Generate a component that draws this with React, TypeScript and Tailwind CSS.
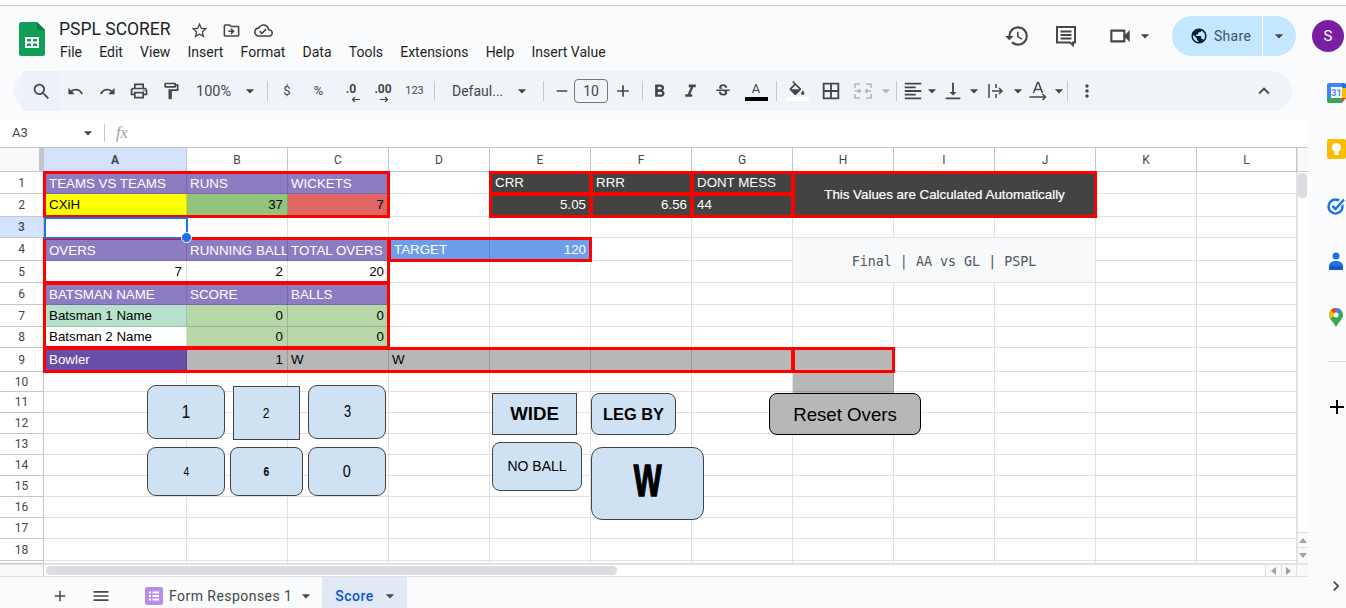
import type { ReactNode } from 'react';
import {
  MdStarBorder,
  MdOutlineDriveFileMove,
  MdOutlineCloudDone,
  MdHistory,
  MdOutlineVideocam,
  MdPublic,
  MdSearch,
  MdUndo,
  MdRedo,
  MdOutlinePrint,
  MdOutlineFormatPaint,
  MdFormatBold,
  MdFormatItalic,
  MdStrikethroughS,
  MdBorderAll,
  MdFormatAlignLeft,
  MdVerticalAlignBottom,
  MdMoreVert,
  MdExpandLess,
  MdAdd,
  MdMenu,
  MdChevronRight,
  MdArrowDropDown,
  MdRemove,
} from 'react-icons/md';

const COLS = ['', 'A', 'B', 'C', 'D', 'E', 'F', 'G', 'H', 'I', 'J', 'K', 'L'];
const ROWS = Array.from({ length: 19 }, (_, i) => i + 1);
const GRID =
  'grid grid-cols-[44px_143px_101px_101px_101px_101px_101px_101px_101px_101px_101px_101px_100px] grid-rows-[24px_22px_23px_21px_23px_22px_22px_22px_21px_24px_20px_21px_21px_21px_21px_21px_21px_21px_22px_3px]';

type Cell = { t?: string; bg?: string; cls?: string };

const head = 'pt-[3px] text-white';
const num = 'text-right';
const dark = 'bg-[#434343] text-white';

const cells: Record<string, Cell> = {
  A1: { t: 'TEAMS VS TEAMS', bg: 'bg-[#8e7cc3]', cls: head },
  B1: { t: 'RUNS', bg: 'bg-[#8e7cc3]', cls: head },
  C1: { t: 'WICKETS', bg: 'bg-[#8e7cc3]', cls: head },
  A2: { t: 'CXiH', bg: 'bg-[#ffff00]' },
  B2: { t: '37', bg: 'bg-[#93c47d]', cls: num },
  C2: { t: '7', bg: 'bg-[#e06666]', cls: num },
  E1: { t: 'CRR', bg: dark },
  F1: { t: 'RRR', bg: dark },
  G1: { t: 'DONT MESS', bg: dark },
  E2: { t: '5.05', bg: dark, cls: num },
  F2: { t: '6.56', bg: dark, cls: num },
  G2: { t: '44', bg: dark },
  A4: { t: 'OVERS', bg: 'bg-[#8e7cc3]', cls: head },
  B4: { t: 'RUNNING BALL', bg: 'bg-[#8e7cc3]', cls: head },
  C4: { t: 'TOTAL OVERS', bg: 'bg-[#8e7cc3]', cls: head },
  D4: { t: 'TARGET', bg: 'bg-[#6d9eeb]', cls: 'pt-px text-white' },
  E4: { t: '120', bg: 'bg-[#6d9eeb]', cls: 'pt-px text-right text-white' },
  A5: { t: '7', cls: num },
  B5: { t: '2', cls: num },
  C5: { t: '20', cls: num },
  A6: { t: 'BATSMAN NAME', bg: 'bg-[#8e7cc3]', cls: head },
  B6: { t: 'SCORE', bg: 'bg-[#8e7cc3]', cls: head },
  C6: { t: 'BALLS', bg: 'bg-[#8e7cc3]', cls: head },
  A7: { t: 'Batsman 1 Name', bg: 'bg-[#b7e1cd]' },
  B7: { t: '0', bg: 'bg-[#b6d7a8]', cls: num },
  C7: { t: '0', bg: 'bg-[#b6d7a8]', cls: num },
  A8: { t: 'Batsman 2 Name' },
  B8: { t: '0', bg: 'bg-[#b6d7a8]', cls: num },
  C8: { t: '0', bg: 'bg-[#b6d7a8]', cls: num },
  A9: { t: 'Bowler', bg: 'bg-[#674ea7]', cls: 'text-white' },
  B9: { t: '1', bg: 'bg-[#b7b7b7]', cls: num },
  C9: { t: 'W', bg: 'bg-[#b7b7b7]' },
  D9: { t: 'W', bg: 'bg-[#b7b7b7]' },
  E9: { bg: 'bg-[#b7b7b7]' },
  F9: { bg: 'bg-[#b7b7b7]' },
  G9: { bg: 'bg-[#b7b7b7]' },
  H9: { bg: 'bg-[#b7b7b7]' },
  H10: { bg: 'bg-[#b7b7b7]' },
  H11: { bg: 'bg-[#b7b7b7]' },
};

const redBoxes = [
  'col-[2/5] row-[2/4]',
  'col-[2/5] row-[5/7]',
  'col-[2/5] row-[7/10]',
  'col-[2/9] row-[10/11]',
  'col-[9/10] row-[10/11]',
  'col-[5/7] row-[5/6]',
  'col-[6/7] row-[2/3]',
  'col-[7/8] row-[2/3]',
  'col-[8/9] row-[2/3]',
  'col-[6/7] row-[3/4]',
  'col-[7/8] row-[3/4]',
  'col-[8/9] row-[3/4]',
  'col-[9/12] row-[2/4]',
];

function Caret({ className = '' }: { className?: string }) {
  return <MdArrowDropDown className={`shrink-0 text-[20px] text-[#444746] ${className}`} />;
}

function Slot({ className, children }: { className: string; children?: ReactNode }) {
  return <div className={`flex h-full shrink-0 items-center justify-center text-[#444746] ${className}`}>{children}</div>;
}

function Sep({ className }: { className: string }) {
  return (
    <div className={`flex h-full shrink-0 items-center justify-center ${className}`}>
      <div className="h-[20px] w-px bg-[#c7c7c7]" />
    </div>
  );
}

function SheetsLogo() {
  return (
    <svg width="26" height="34" viewBox="0 0 26 34">
      <path d="M2.5 0H18l8 8v23.500a2.500 2.500 0 0 1-2.500 2.500h-21A2.500 2.500 0 0 1 0 31.500v-29A2.500 2.500 0 0 1 2.500 0z" fill="#0f9d58" />
      <path d="M18 0l8 8h-8z" fill="#0b7f46" />
      <path d="M6 15h14v11H6z M8 17v2.500h4V17z M14 17v2.500h4V17z M8 21.500V24h4v-2.500z M14 21.500V24h4v-2.500z" fill="#fff" fillRule="evenodd" />
    </svg>
  );
}

function CommentIcon() {
  return (
    <svg width="24" height="24" viewBox="0 0 24 24" fill="none" stroke="#444746" strokeWidth="2">
      <path d="M3 3h18v15.500h-2v2.500l-3-2.500H3z" />
      <path d="M6.500 7.500h11M6.500 11h11M6.500 14.500h11" />
    </svg>
  );
}

function MergeIcon() {
  return (
    <svg width="18" height="18" viewBox="0 0 18 18" fill="none" stroke="#b4b6b8" strokeWidth="1.500">
      <path d="M1 6V2h5M12 2h5v4M17 12v4h-5M6 16H1v-4" />
      <path d="M1 9h5M4.500 7l2 2-2 2M17 9h-5M13.500 7l-2 2 2 2" />
    </svg>
  );
}

function WrapIcon() {
  return (
    <svg width="20" height="20" viewBox="0 0 20 20" fill="none" stroke="#444746" strokeWidth="1.500">
      <path d="M3 3v14M10 3v4M10 13v4M6 10h10M13 7l3 3-3 3" />
    </svg>
  );
}

function RotateIcon() {
  return (
    <svg width="22" height="22" viewBox="0 0 22 22" fill="none" stroke="#444746" strokeWidth="1.500">
      <path d="M6.500 13L10.500 2.500h1L15.500 13M8 9.500h6" />
      <path d="M2.500 17h16M15.500 14l3 3-3 3" />
    </svg>
  );
}

function FillIcon() {
  return (
    <svg width="18" height="14" viewBox="3 0 18 17" fill="#444746">
      <path d="M16.560 8.940L7.620 0 6.210 1.410l2.380 2.380-5.150 5.150c-.59.59-.59 1.540 0 2.120l5.500 5.500c.29.29.68.44 1.060.44s.77-.15 1.060-.44l5.500-5.500c.59-.58.59-1.530 0-2.120zM5.210 10L10 5.210 14.790 10H5.210z" />
      <path d="M19 11.500s-2 2.170-2 3.500c0 1.100.9 2 2 2s2-.9 2-2c0-1.330-2-3.500-2-3.500z" />
    </svg>
  );
}

function DecimalArrow({ dir }: { dir: 'left' | 'right' }) {
  return (
    <svg width="10" height="7" viewBox="0 0 10 7" fill="none" stroke="#444746" strokeWidth="1.200" className="absolute -bottom-[5px] left-[5px]">
      {dir === 'left' ? <path d="M9 3.500H1.500M4 1L1.500 3.500 4 6" /> : <path d="M1 3.500h7.500M6 1l2.500 2.500L6 6" />}
    </svg>
  );
}

function CalendarIcon() {
  return (
    <svg width="19" height="20" viewBox="0 0 19 20">
      <path d="M4 0h11v4H4z" fill="#4285f4" />
      <path d="M0 2a2 2 0 0 1 2-2h2v15H0z" fill="#4285f4" />
      <path d="M15 0h2a2 2 0 0 1 2 2v3h-4z" fill="#1a73e8" />
      <path d="M15 5h4v10h-4z" fill="#fbbc04" />
      <path d="M0 15h15v5H2a2 2 0 0 1-2-2z" fill="#34a853" />
      <path d="M15 15h4l-4 5z" fill="#ea4335" />
      <rect x="4" y="4" width="11" height="11" fill="#fff" />
      <text x="9.500" y="13" textAnchor="middle" fontSize="9" fontWeight="700" fill="#4285f4" fontFamily="Roboto, sans-serif">31</text>
    </svg>
  );
}

function KeepIcon() {
  return (
    <svg width="19" height="20" viewBox="0 0 19 20">
      <rect width="19" height="20" rx="2" fill="#fbbc04" />
      <circle cx="9.500" cy="8.500" r="4.500" fill="#fff" />
      <rect x="7.500" y="13" width="4" height="3" fill="#fff" />
    </svg>
  );
}

function TasksIcon() {
  return (
    <svg width="19" height="18" viewBox="0 0 19 18" fill="none">
      <circle cx="8.500" cy="9.500" r="7" stroke="#1a73e8" strokeWidth="2.500" />
      <path d="M5 9l3 3 9-10" stroke="#fff" strokeWidth="5" />
      <path d="M5.500 9l3 3 8.500-9.500" stroke="#1a73e8" strokeWidth="2.500" />
    </svg>
  );
}

function ContactsIcon() {
  return (
    <svg width="14" height="18" viewBox="0 0 14 18">
      <circle cx="7" cy="4" r="3.500" fill="#1a73e8" />
      <path d="M0 14c0-3 3-5 7-5s7 2 7 5v4H0z" fill="#1a73e8" />
      <path d="M0 14h14v4H0z" fill="#185abc" />
    </svg>
  );
}

function MapsIcon() {
  return (
    <svg width="14" height="19" viewBox="0 0 14 19">
      <path d="M7 0a7 7 0 0 1 7 7c0 4-4.500 7-7 12C4.500 14 0 11 0 7a7 7 0 0 1 7-7z" fill="#34a853" />
      <path d="M7 0a7 7 0 0 1 5.300 2.400L7 7z" fill="#4285f4" />
      <path d="M7 0a7 7 0 0 0-5.300 2.400L7 7z" fill="#ea4335" />
      <path d="M1.700 2.400A7 7 0 0 0 0 7c0 1.300.5 2.500 1.200 3.600L7 7z" fill="#fbbc04" />
      <circle cx="7" cy="7" r="2.500" fill="#fff" />
    </svg>
  );
}

function FormsIcon() {
  return (
    <svg width="18" height="18" viewBox="0 0 18 18">
      <rect width="18" height="18" rx="2" fill="#b98ce6" />
      <path d="M4 4.500h2v2H4zM4 8h2v2H4zM4 11.500h2v2H4zM7.500 4.500H14v2H7.500zM7.500 8H14v2H7.500zM7.500 11.500H14v2H7.500z" fill="#fff" />
    </svg>
  );
}

function TitleBar() {
  return (
    <header className="flex h-[65px] shrink-0 items-start font-['Roboto',sans-serif]">
      <div className="ml-[19px] mt-[16px]">
        <SheetsLogo />
      </div>
      <div className="ml-[14px] mt-[12px] flex flex-col">
        <div className="flex h-[24px] items-center text-[#444746]">
          <span className="w-[131px] text-[17.5px] leading-none text-[#1f1f1f]">PSPL SCORER</span>
          <MdStarBorder className="text-[19px]" />
          <MdOutlineDriveFileMove className="ml-[13px] text-[19px]" />
          <MdOutlineCloudDone className="ml-[13px] text-[19px]" />
        </div>
        <nav className="mt-px flex gap-[17.2px] pl-px text-[14px] leading-[18px] text-[#1f1f1f]">
          {['File', 'Edit', 'View', 'Insert', 'Format', 'Data', 'Tools', 'Extensions', 'Help', 'Insert Value'].map((m) => (
            <span key={m}>{m}</span>
          ))}
        </nav>
      </div>
      <div className="ml-auto mr-[2px] mt-[10px] flex h-[40px] items-center text-[#444746]">
        <MdHistory className="text-[26px]" />
        <div className="ml-[24px]">
          <CommentIcon />
        </div>
        <MdOutlineVideocam className="ml-[29px] text-[26px]" />
        <Caret className="ml-[2px]" />
        <div className="ml-[17px] flex h-[40px] w-[124px] items-center rounded-full bg-[#c2e7ff] text-[#001d35]">
          <div className="flex h-full w-[91px] items-center border-r border-white pl-[18px]">
            <MdPublic className="text-[18px]" />
            <span className="ml-[6px] text-[14px] tracking-[0.3px] text-[#3b5266]">Share</span>
          </div>
          <Caret className="ml-[6px] text-[#001d35]" />
        </div>
        <div className="ml-[16px] flex size-[32px] items-center justify-center rounded-full bg-[#7b1fa2] text-[15px] text-white">S</div>
      </div>
    </header>
  );
}

function Toolbar() {
  return (
    <div className="mx-[14px] flex h-[40px] w-[1278px] shrink-0 items-center rounded-full bg-[#f0f4f9] font-['Roboto',sans-serif] text-[#444746]">
      <Slot className="ml-[8px] w-[38px] bg-[#edf2fa]"><MdSearch className="text-[21px]" /></Slot>
      <Slot className="w-[31px]"><MdUndo className="text-[17px]" /></Slot>
      <Slot className="w-[32px]"><MdRedo className="text-[17px]" /></Slot>
      <Slot className="w-[32px]"><MdOutlinePrint className="text-[20px]" /></Slot>
      <Slot className="w-[31px]"><MdOutlineFormatPaint className="text-[20px]" /></Slot>
      <Slot className="w-[54px] justify-start pl-[10px] pt-px text-[14.5px]">100%</Slot>
      <Slot className="w-[20px]"><Caret /></Slot>
      <Sep className="w-[14px]" />
      <Slot className="w-[26px] text-[13px]">$</Slot>
      <Slot className="w-[37px] text-[13px]">%</Slot>
      <Slot className="w-[28px] text-[12px] font-bold">
        <span className="relative -top-[2px]">.0<DecimalArrow dir="left" /></span>
      </Slot>
      <Slot className="w-[36px] text-[12px] font-bold">
        <span className="relative -top-[2px]">.00<DecimalArrow dir="right" /></span>
      </Slot>
      <Slot className="w-[27px] text-[11px]">123</Slot>
      <Sep className="w-[12px]" />
      <Slot className="w-[74px] justify-start pl-[12px] text-[14px]">Defaul...</Slot>
      <Slot className="w-[16px]"><Caret /></Slot>
      <Sep className="w-[26px]" />
      <Slot className="-ml-[6px] w-[24px]"><MdRemove className="text-[18px]" /></Slot>
      <Slot className="w-[34px]">
        <div className="flex h-[24px] w-[34px] items-center justify-center rounded-[4px] border border-[#747775] text-[14px]">10</div>
      </Slot>
      <Slot className="w-[30px]"><MdAdd className="text-[20px]" /></Slot>
      <Sep className="w-[8px]" />
      <Slot className="w-[26px]"><MdFormatBold className="text-[21px]" /></Slot>
      <Slot className="w-[36px]"><MdFormatItalic className="text-[21px]" /></Slot>
      <Slot className="w-[30px]"><MdStrikethroughS className="text-[18px]" /></Slot>
      <Slot className="w-[36px]">
        <div className="flex w-[23px] flex-col items-center">
          <span className="text-[13px] leading-[15px]">A</span>
          <div className="mt-[1px] h-[4px] w-[23px] bg-black" />
        </div>
      </Slot>
      <Sep className="w-[4px]" />
      <Slot className="w-[38px]">
        <div className="flex w-[23px] flex-col items-center">
          <FillIcon />
          <div className="mt-[2px] h-[4px] w-[23px] bg-white" />
        </div>
      </Slot>
      <Slot className="w-[30px]"><MdBorderAll className="text-[22px]" /></Slot>
      <Slot className="w-[34px]"><MergeIcon /></Slot>
      <Slot className="w-[12px]"><Caret className="text-[#b4b6b8]" /></Slot>
      <Sep className="w-[8px]" />
      <Slot className="w-[26px]"><MdFormatAlignLeft className="text-[22px]" /></Slot>
      <Slot className="w-[12px]"><Caret /></Slot>
      <Slot className="w-[30px]"><MdVerticalAlignBottom className="text-[22px]" /></Slot>
      <Slot className="w-[12px]"><Caret /></Slot>
      <Slot className="w-[32px]"><WrapIcon /></Slot>
      <Slot className="w-[12px]"><Caret /></Slot>
      <Slot className="w-[28px]"><RotateIcon /></Slot>
      <Slot className="w-[14px]"><Caret /></Slot>
      <Sep className="w-[2px]" />
      <Slot className="w-[38px]"><MdMoreVert className="text-[20px]" /></Slot>
      <Slot className="ml-auto mr-[16px] w-[24px]"><MdExpandLess className="text-[22px]" /></Slot>
    </div>
  );
}

function Sheet() {
  return (
    <div className="relative h-[416px] w-[1297px] shrink-0 overflow-hidden bg-white font-['Liberation_Sans',Arial,sans-serif] text-[13.33px] text-black">
      <div className={GRID}>
        {COLS.map((c) => (
          <div
            key={c || 'corner'}
            className={
              c === ''
                ? 'border-b-[1px] border-r-[5px] border-[#c4c7c5] bg-[#f8f9fa]'
                : `flex items-center justify-center border-b border-r border-[#c4c7c5] font-['Roboto',sans-serif] text-[12px] text-[#444746] ${c === 'A' ? 'bg-[#d3e3fd] font-bold text-[#041e49]' : 'bg-white'}`
            }
          >
            {c}
          </div>
        ))}
        {ROWS.map((r) => (
          <RowCells key={r} r={r} />
        ))}
      </div>

      {/* merged cells and selection lie over the base grid */}
      <div className={`pointer-events-none absolute inset-0 ${GRID}`}>
        <div className="col-[9/12] row-[2/4] flex items-center justify-center bg-[#434343] text-[13.33px] text-white [-webkit-text-stroke:0.2px_white]">
          This Values are Calculated Automatically
        </div>
        <div className="col-[9/12] row-[5/7] flex items-center justify-center border-b border-r border-[#e1e1e1] bg-[#f8f9fa] pt-[3px] font-['DejaVu_Sans_Mono',monospace] text-[13.33px] text-[#50565c]">
          Final | AA vs GL | PSPL
        </div>
        {redBoxes.map((b) => (
          <div key={b} className={`-m-px border-[3px] border-[#ff0000] ${b}`} />
        ))}
        <div className="relative col-[2/3] row-[4/5] -mb-px -mr-px border-2 border-[#1a73e8]">
          <div className="absolute -bottom-[6px] -right-[6px] size-[11px] rounded-full border border-white bg-[#1a73e8]" />
        </div>
      </div>

      <Drawings />
    </div>
  );
}

function RowCells({ r }: { r: number }) {
  return (
    <>
      <div
        className={`flex items-center justify-center border-b border-r border-[#c4c7c5] font-['Roboto',sans-serif] text-[12px] text-[#444746] ${r === 3 ? 'bg-[#d3e3fd] font-medium text-[#041e49]' : 'bg-white'}`}
      >
        {r < 19 ? r : ''}
      </div>
      {COLS.slice(1).map((c) => {
        const key = `${c}${r}`;
        const cell: Cell = cells[key] ?? {};
        const line = cell.bg ? 'border-black/15' : 'border-[#e1e1e1]';
        const pad = c === 'B' || c === 'C' || key === 'D9' ? 'pl-[3px]' : 'pl-[5px]';
        return (
          <div
            key={key}
            className={`flex items-center overflow-hidden whitespace-nowrap border-b border-r pr-[4px] ${pad} ${line} ${cell.bg ?? 'bg-white'} ${cell.cls ?? ''}`}
          >
            <span className="w-full">{cell.t}</span>
          </div>
        );
      })}
    </>
  );
}

const btn = 'absolute flex items-center justify-center border border-[#434343] bg-[#cfe2f3] text-black';

// shapes drawn on the sheet, placed on the canvas; offsets are from the sheet's top-left at y=148
function Drawings() {
  return (
    <>
      <div className={`${btn} left-[147px] top-[237px] h-[54px] w-[78px] rounded-[9px] text-[18px]`}><span className="scale-x-[0.85]">1</span></div>
      <div className={`${btn} left-[233px] top-[238px] h-[54px] w-[67px] text-[15px]`}><span className="scale-x-[0.8]">2</span></div>
      <div className={`${btn} left-[308px] top-[237px] h-[54px] w-[78px] rounded-[9px] text-[16px]`}><span className="scale-x-[0.8]">3</span></div>
      <div className={`${btn} left-[147px] top-[299px] h-[49px] w-[78px] rounded-[9px] text-[12px]`}><span className="scale-x-[0.85]">4</span></div>
      <div className={`${btn} left-[230px] top-[299px] h-[49px] w-[73px] rounded-[8px] text-[12px] font-bold`}><span className="scale-x-[0.85]">6</span></div>
      <div className={`${btn} left-[308px] top-[299px] h-[49px] w-[78px] rounded-[9px] text-[17px]`}><span className="scale-x-[0.85]">0</span></div>
      <div className={`${btn} left-[492px] top-[245px] h-[42px] w-[85px] text-[18.67px] font-bold`}>WIDE</div>
      <div className={`${btn} left-[591px] top-[245px] h-[42px] w-[85px] rounded-[8px] text-[16.4px] font-bold`}>LEG BY</div>
      <div className={`${btn} left-[492px] top-[294px] h-[49px] w-[90px] rounded-[8px] text-[14px]`}>NO BALL</div>
      <div className={`${btn} left-[591px] top-[299px] h-[73px] w-[113px] rounded-[11px]`}>
        <span className="-mt-[6px] scale-x-[0.67] text-[44px] font-bold leading-none [-webkit-text-stroke:1.5px_black]">W</span>
      </div>
      <div className="absolute left-[769px] top-[245px] flex h-[42px] w-[152px] items-center justify-center rounded-[8px] border border-black bg-[#b7b7b7] pt-[2px] text-[18.67px] text-black">
        Reset Overs
      </div>
    </>
  );
}

function VScroll() {
  return (
    <div className="flex h-[416px] w-[11px] shrink-0 flex-col border-l border-[#e1e1e1] bg-white">
      <div className="h-[24px] shrink-0 border-b border-[#c4c7c5] bg-[#f8f9fa]" />
      <div className="mt-px h-[25px] w-[9px] shrink-0 rounded-[4px] bg-[#dadce0]" />
      <div className="mt-auto flex h-[32px] flex-col bg-[#f8f9fa]">
        <div className="flex h-[16px] items-center justify-center border-y border-[#e1e1e1]">
          <div className="size-0 border-x-[4px] border-b-[5px] border-x-transparent border-b-[#9aa0a6]" />
        </div>
        <div className="flex h-[16px] items-center justify-center border-b border-[#e1e1e1]">
          <div className="size-0 border-x-[4px] border-t-[5px] border-x-transparent border-t-[#9aa0a6]" />
        </div>
      </div>
    </div>
  );
}

function HScroll() {
  return (
    <div className="flex h-[13px] shrink-0 border-y border-[#e1e1e1] bg-white">
      <div className="h-full w-[44px] shrink-0 border-r border-[#c4c7c5] bg-[#f8f9fa]" />
      <div className="ml-[2px] h-[9px] w-[571px] self-center rounded-[5px] bg-[#dadce0]" />
      <div className="ml-auto flex h-full w-[32px] shrink-0 bg-[#f8f9fa]">
        <div className="flex flex-1 items-center justify-center border-x border-[#e1e1e1]">
          <div className="size-0 border-y-[4px] border-r-[5px] border-y-transparent border-r-[#9aa0a6]" />
        </div>
        <div className="flex flex-1 items-center justify-center border-r border-[#e1e1e1]">
          <div className="size-0 border-y-[4px] border-l-[5px] border-y-transparent border-l-[#9aa0a6]" />
        </div>
      </div>
      <div className="h-full w-[11px] shrink-0 bg-[#f8f9fa]" />
    </div>
  );
}

function SidePanel() {
  return (
    <aside className="flex flex-1 flex-col pl-[19px] pt-[12px]">
      <CalendarIcon />
      <div className="mt-[36px]"><KeepIcon /></div>
      <div className="mt-[38px]"><TasksIcon /></div>
      <div className="ml-[2px] mt-[37px]"><ContactsIcon /></div>
      <div className="ml-[2px] mt-[38px]"><MapsIcon /></div>
      <div className="mt-[34px] h-px w-[20px] bg-[#dadce0]" />
      <MdAdd className="-ml-[2px] mt-[33px] text-[24px] text-black" />
    </aside>
  );
}

function TabBar() {
  return (
    <footer className="relative flex h-[31px] items-center font-['Roboto',sans-serif] text-[14px] text-[#444746]">
      <MdAdd className="ml-[51px] mt-[7px] text-[18px]" />
      <MdMenu className="ml-[22px] mt-[7px] text-[20px]" />
      <div className="ml-[34px] mt-[7px]"><FormsIcon /></div>
      <span className="ml-[6px] mt-[7px] tracking-[0.45px]">Form Responses 1</span>
      <Caret className="ml-[4px] mt-[7px]" />
      <div className="ml-[6px] flex h-full w-[85px] items-center bg-[#e1e9f7] pl-[13px] pt-[7px] font-medium tracking-[0.45px] text-[#0b57d0]">
        Score
        <Caret className="ml-[6px] text-[#0b57d0]" />
      </div>
      <MdChevronRight className="absolute left-[1326px] top-[-1px] text-[20px] text-[#444746]" />
    </footer>
  );
}

export default function App() {
  return (
    <div className="flex h-[608px] w-[1346px] flex-col overflow-hidden bg-[#f9fbfd]">
      <div className="h-[6px] shrink-0 border-b border-[#cccccc] bg-white" />
      <TitleBar />
      <div className="flex flex-1">
        <main className="flex w-[1308px] shrink-0 flex-col">
          <Toolbar />
          <div className="mt-[8px] flex h-[29px] shrink-0 items-center border-b border-[#c4c7c5] bg-white font-['Roboto',sans-serif] text-[13px] text-[#444746]">
            <span className="ml-[12px] w-[66px]">A3</span>
            <Caret />
            <div className="ml-[6px] h-[18px] w-px bg-[#c7c7c7]" />
            <span className="ml-[11px] font-['Liberation_Serif',serif] text-[16px] italic text-[#9aa0a6]">fx</span>
          </div>
          <div className="flex">
            <Sheet />
            <VScroll />
          </div>
          <HScroll />
        </main>
        <SidePanel />
      </div>
      <TabBar />
    </div>
  );
}
